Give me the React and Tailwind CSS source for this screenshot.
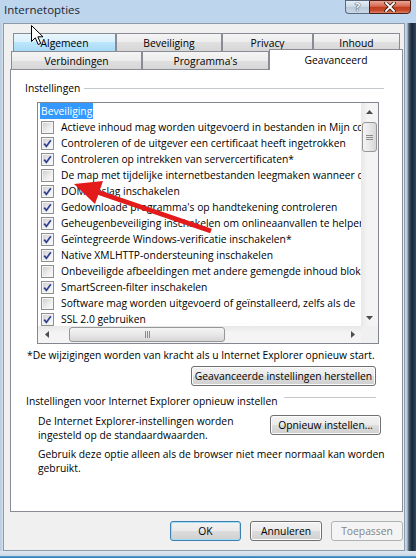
import React from 'react';

// visible part of each setting, the list is clipped by its own width
const items = [
  { label: 'Actieve inhoud mag worden uitgevoerd in bestanden in Mijn co', checked: false },
  { label: 'Controleren of de uitgever een certificaat heeft ingetrokken', checked: true },
  { label: 'Controleren op intrekken van servercertificaten*', checked: true },
  { label: 'De map met tijdelijke internetbestanden leegmaken wanneer d', checked: false },
  { label: 'DOM-opslag inschakelen', checked: true },
  { label: "Gedownloade programma's op handtekening controleren", checked: true },
  { label: 'Geheugenbeveiliging inschakelen om onlineaanvallen te helpen', checked: true },
  { label: 'Geïntegreerde Windows-verificatie inschakelen*', checked: true },
  { label: 'Native XMLHTTP-ondersteuning inschakelen', checked: true },
  { label: 'Onbeveiligde afbeeldingen met andere gemengde inhoud blokk', checked: false },
  { label: 'SmartScreen-filter inschakelen', checked: true },
  { label: 'Software mag worden uitgevoerd of geïnstalleerd, zelfs als de', checked: false },
  { label: 'SSL 2.0 gebruiken', checked: true },
];

// Win7 style checkbox
const Check = ({ checked }) => (
  <span className="flex h-[13px] w-[13px] shrink-0 border border-[#8e8f8f] bg-[#f4f4f4] p-px">
    <span className="relative flex flex-1 items-center justify-center bg-[linear-gradient(135deg,#d0d0d0,#eeeeee_60%,#f8f8f8)]">
      {checked && (
        <svg width="11" height="11" viewBox="0 0 11 11" className="absolute -left-px -top-px">
          <path d="M2.2 5.6 L4.4 8.4 L8.8 2.2" fill="none" stroke="#2a3f8f" strokeWidth="1.7" />
        </svg>
      )}
    </span>
  </span>
);

const Btn = ({ className = '', children, primary, disabled }) => (
  <div
    className={`flex h-[20px] items-center justify-center rounded-[3px] border ${
      disabled
        ? 'border-[#adb2b5] bg-[#f4f4f4] text-[#838383]'
        : primary
        ? 'border-[#3c7fb1] bg-[linear-gradient(#f2f2f2_0%,#ebebeb_50%,#dddddd_50%,#cfcfcf_100%)] shadow-[inset_0_0_0_1px_#a6dcf5]'
        : 'border-[#707070] bg-[linear-gradient(#f2f2f2_0%,#ebebeb_50%,#dddddd_50%,#cfcfcf_100%)] shadow-[inset_0_0_0_1px_#fcfcfc]'
    } ${className}`}
  >
    {children}
  </div>
);

const Tab = ({ className = '', children, hover }) => (
  <div
    className={`flex h-[18px] items-center justify-center border-x border-t border-[#898c95] ${
      hover
        ? 'bg-[linear-gradient(#eaf6fd_0%,#d9f0fc_50%,#bee6fd_50%,#a7d9f5_100%)]'
        : 'bg-[linear-gradient(#f4f4f4_0%,#ececec_50%,#e0e0e0_50%,#d6d6d6_100%)]'
    } ${className}`}
  >
    {children}
  </div>
);

const Tri = ({ dir }) => {
  const pts = {
    up: '0,4 3.5,0 7,4',
    down: '0,0 7,0 3.5,4',
    left: '4,0 4,7 0,3.5',
    right: '0,0 0,7 4,3.5',
  }[dir];
  const vertical = dir === 'up' || dir === 'down';
  return (
    <svg width={vertical ? 7 : 4} height={vertical ? 4 : 7}>
      <polygon points={pts} fill="#4d4d4d" />
    </svg>
  );
};

const thumbBg = 'border border-[#979797] rounded-[3px]';

export default function App() {
  return (
    <div className="relative h-[558px] w-[416px] overflow-hidden bg-[linear-gradient(180deg,#bdd5ed,#c9dcf0_60%,#d6e5f4)] font-['Open_Sans',sans-serif] text-[10.3px] leading-[14px] text-black">
      {/* title bar */}
      <div className="flex h-[23px] items-start justify-between">
        <div className="pl-[4px] pt-[2px] text-[11.5px] leading-[16px] text-[#1c2733]">Internetopties</div>
        <div className="mr-[5px] flex h-[14px]">
          <div className="flex w-[24px] items-center justify-center rounded-bl-[4px] border border-r-0 border-[#5a6b7e] bg-[linear-gradient(#e6eef6,#cfdbe8_45%,#b9cadc_50%,#c9d8e7)] text-[11px] font-bold leading-[12px] text-white [text-shadow:0_0_1px_#1a2530,0_0_1px_#1a2530]">
            ?
          </div>
          <div className="flex w-[42px] items-center justify-center rounded-br-[4px] border border-[#4a1e16] bg-[linear-gradient(#e9a595,#d5694f_45%,#c2391b_50%,#c74b2d_80%,#dc8466)]">
            <svg width="12" height="10" viewBox="0 0 12 10">
              <path d="M2 1 L10 9 M10 1 L2 9" stroke="#3a1d18" strokeWidth="3.4" strokeLinecap="square" />
              <path d="M2 1 L10 9 M10 1 L2 9" stroke="#ffffff" strokeWidth="1.8" strokeLinecap="square" />
            </svg>
          </div>
        </div>
      </div>

      <div className="flex">
        <div className="h-[528px] w-[3px] bg-[linear-gradient(90deg,#b7c9db,#d3e1ee)]" />

        {/* client area */}
        <div className="h-[528px] w-[402px] border border-[#8c9aaa] bg-[#f0f0f0]">
          {/* back tab row */}
          <div className="mt-[9px] flex h-[18px] pl-[9px]">
            <Tab hover className="w-[103px]">Algemeen</Tab>
            <Tab className="w-[106px]">Beveiliging</Tab>
            <Tab className="w-[91px]">Privacy</Tab>
            <Tab className="w-[87px]">Inhoud</Tab>
          </div>
          {/* front tab row */}
          <div className="flex h-[18px] items-end pl-[7px]">
            <Tab className="w-[131px]">Verbindingen</Tab>
            <Tab className="w-[127px]">Programma's</Tab>
            <div className="relative z-10 -mb-px flex h-[21px] w-[134px] items-center justify-center border-x border-t border-[#898c95] bg-white pb-px">
              Geavanceerd
            </div>
          </div>

          {/* panel */}
          <div className="ml-[6px] flex h-[443px] w-[393px] flex-col border border-[#898c95] bg-white">
            <div className="mt-[11px] flex h-[14px] items-center pl-[14px] pr-[18px]">
              <span>Instellingen</span>
              <span className="ml-[4px] h-px flex-1 bg-[#c4c9ce]" />
            </div>

            {/* list box */}
            <div className="ml-[26px] mt-[7px] flex h-[242px] w-[342px] flex-col border border-[#828790]">
              <div className="flex h-[223px]">
                <div className="flex-1 overflow-hidden">
                  <div className="flex h-[16px] items-center pl-[2px]">
                    <span className="h-[16px] bg-[#3399ff] px-px leading-[16px] text-white">Beveiliging</span>
                  </div>
                  {items.map((it) => (
                    <div key={it.label} className="flex h-[16px] items-center gap-[7px] whitespace-nowrap pl-[3px]">
                      <Check checked={it.checked} />
                      <span>{it.label}</span>
                    </div>
                  ))}
                </div>
                {/* vertical scrollbar */}
                <div className="flex w-[17px] flex-col bg-[linear-gradient(90deg,#e8e8e8,#f4f4f4_40%,#f4f4f4)]">
                  <div className="flex h-[17px] items-center justify-center">
                    <Tri dir="up" />
                  </div>
                  <div className={`ml-px mt-[2px] flex h-[30px] w-[15px] flex-col items-center justify-center gap-[1px] bg-[linear-gradient(90deg,#f4f4f4,#e8e8e8_50%,#d6d6d6)] ${thumbBg}`}>
                    <span className="h-px w-[7px] bg-[#8a8a8a]" />
                    <span className="h-px w-[7px] bg-[#8a8a8a]" />
                    <span className="h-px w-[7px] bg-[#8a8a8a]" />
                  </div>
                  <div className="flex-1" />
                  <div className="flex h-[17px] items-center justify-center">
                    <Tri dir="down" />
                  </div>
                </div>
              </div>
              {/* horizontal scrollbar */}
              <div className="flex h-[17px]">
                <div className="flex flex-1 bg-[linear-gradient(180deg,#e8e8e8,#f4f4f4_40%,#f4f4f4)]">
                  <div className="flex w-[17px] items-center justify-center">
                    <Tri dir="left" />
                  </div>
                  <div className={`my-px ml-[14px] flex w-[156px] items-center justify-center gap-[1px] bg-[linear-gradient(180deg,#f4f4f4,#e8e8e8_50%,#d6d6d6)] ${thumbBg}`}>
                    <span className="h-[7px] w-px bg-[#8a8a8a]" />
                    <span className="h-[7px] w-px bg-[#8a8a8a]" />
                    <span className="h-[7px] w-px bg-[#8a8a8a]" />
                  </div>
                  <div className="flex-1" />
                  <div className="flex w-[17px] items-center justify-center">
                    <Tri dir="right" />
                  </div>
                </div>
                <div className="w-[17px] bg-[#f0f0f0]" />
              </div>
            </div>

            <div className="mt-[4px] pl-[16px]">*De wijzigingen worden van kracht als u Internet Explorer opnieuw start.</div>

            <Btn className="mr-[26px] mt-[4px] w-[185px] self-end">Geavanceerde instellingen herstellen</Btn>

            <div className="mt-[8px] flex h-[14px] pl-[15px] pr-[26px]">
              <span>Instellingen voor Internet Explorer opnieuw instellen</span>
              <span className="ml-[6px] mt-[3px] h-px flex-1 bg-[#c4c9ce]" />
            </div>

            <div className="mt-[6px] flex items-start justify-between pl-[27px] pr-[21px]">
              <div>
                <div>De Internet Explorer-instellingen worden</div>
                <div>ingesteld op de standaardwaarden.</div>
              </div>
              <Btn className="mt-px w-[111px]">Opnieuw instellen...</Btn>
            </div>

            <div className="mt-[5px] pl-[27px]">
              <div>Gebruik deze optie alleen als de browser niet meer normaal kan worden</div>
              <div>gebruikt.</div>
            </div>
          </div>

          {/* dialog buttons */}
          <div className="mt-[9px] flex gap-[9px] pl-[166px]">
            <Btn primary className="w-[71px]">OK</Btn>
            <Btn className="w-[72px]">Annuleren</Btn>
            <Btn disabled className="w-[72px]">Toepassen</Btn>
          </div>
        </div>

        <div className="h-[528px] flex-1 bg-[linear-gradient(90deg,#cfdcea_0px,#b5c7d9_2px,#45596e_4px,#1b2633_7px,#2c4868_11px)]" />
      </div>

      <div className="h-[7px] bg-[linear-gradient(180deg,#dde7f1,#cbd9e8_65%,#4790c4_80%,#2a78b2)]" />

      {/* red annotation arrow */}
      <svg className="pointer-events-none absolute left-0 top-0" width="416" height="558">
        <line x1="211" y1="231" x2="97" y2="192" stroke="#e41b1b" strokeWidth="5" />
        <polygon points="74,184 103,181 95,204" fill="#e41b1b" />
      </svg>

      {/* mouse pointer */}
      <svg className="pointer-events-none absolute left-[31px] top-[25px]" width="14" height="21" viewBox="0 0 14 21">
        <path d="M0.5 0.5 L0.5 16.5 L4.3 12.8 L7.2 19.5 L9.7 18.4 L6.9 11.8 L12 11.8 Z" fill="#ffffff" stroke="#000000" strokeWidth="1" strokeLinejoin="round" />
      </svg>
    </div>
  );
}
